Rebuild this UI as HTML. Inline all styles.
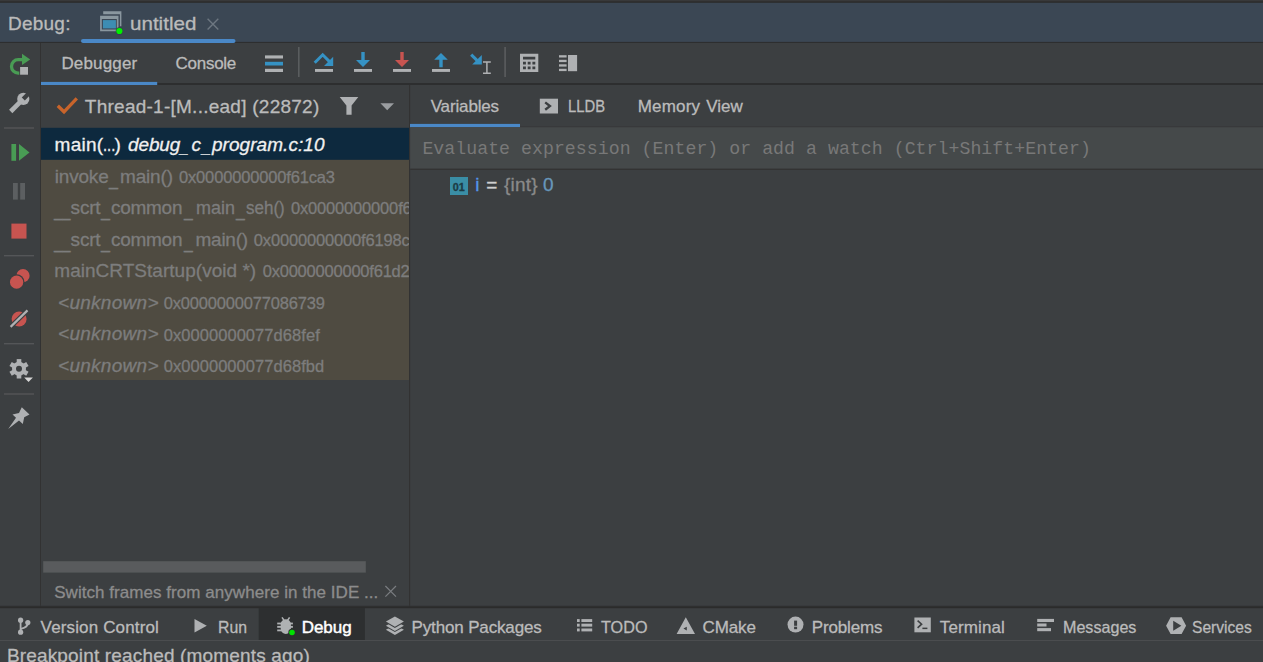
<!DOCTYPE html>
<html lang="en">
<head>
<meta charset="utf-8">
<title>Debug</title>
<style>
html,body{margin:0;padding:0;background:#3c3f41;}
body{width:1263px;height:662px;overflow:hidden;position:relative;font-family:"Liberation Sans",sans-serif;}
.t{position:absolute;white-space:pre;line-height:1;-webkit-text-stroke:0.3px currentColor;}
#bg{position:absolute;left:0;top:0;}
#frames{position:absolute;left:41px;top:128px;width:368px;height:252px;overflow:hidden;}
</style>
</head>
<body>
<svg id="bg" width="1263" height="662" viewBox="0 0 1263 662">
<!-- base -->
<rect x="0" y="0" width="1263" height="662" fill="#3c3f41"/>
<!-- top strip + header -->
<rect x="0" y="0" width="1263" height="42" fill="#3b4754"/>
<rect x="0" y="0" width="1263" height="2.8" fill="#2b2b2b"/>
<rect x="0" y="0" width="1263" height="1.3" fill="#38393a"/>
<rect x="0" y="41.9" width="1263" height="1.1" fill="#2d2e2f"/>
<!-- header tab underline -->
<rect x="81" y="38.9" width="154.5" height="4" rx="2" fill="#4a88c7"/>
<!-- left strip border -->
<rect x="40" y="43" width="1" height="564" fill="#323232"/>
<!-- toolbar bottom border -->
<rect x="41" y="83" width="1222" height="2" fill="#2d2e2f"/>
<!-- debugger tab underline -->
<rect x="41" y="81.9" width="116.2" height="3.1" fill="#4a88c7"/>
<!-- splitter -->
<rect x="409" y="85" width="1.2" height="522" fill="#323232"/>
<!-- frames list -->
<rect x="41" y="128" width="368" height="252" fill="#4f4b41"/>
<rect x="41" y="127.8" width="368" height="32" fill="#0d293e"/>
<!-- variables tab underline -->
<rect x="410" y="123.9" width="110" height="3.4" fill="#4a88c7"/>
<rect x="520" y="126.6" width="743" height="1" fill="#323232"/>
<!-- eval field -->
<rect x="410.2" y="127.2" width="853" height="41.5" fill="#45494a"/>
<rect x="410.2" y="168.7" width="853" height="1.2" fill="#323232"/>
<!-- scrollbar -->
<rect x="43.2" y="561.2" width="322.6" height="11.4" fill="#595b5d"/>
<!-- bottom borders -->
<rect x="0" y="605.6" width="1263" height="1" fill="#343637"/>
<rect x="0" y="606.3" width="1263" height="1.9" fill="#2b2b2b"/>
<rect x="258.7" y="608" width="106.2" height="32" fill="#2d2f30"/>
<rect x="0" y="640" width="1263" height="1" fill="#4b4d4f"/>

<!-- ===== header icon ===== -->
<g>
<path d="M103.2 11.3 H121.4 V26.2 H119.9 V14.3 H103.2 Z" fill="#8a979f"/>
<path fill-rule="evenodd" d="M100.1 15.8 H118.5 V31.2 H100.1 Z M101.8 19 V29.6 H116.8 V19 Z" fill="#8a979f"/>
<rect x="102.9" y="20.1" width="13" height="8.3" fill="#3d8db3"/>
<circle cx="119.4" cy="31" r="3.7" fill="#34404b"/>
<circle cx="119.4" cy="31" r="3.1" fill="#00f000"/>
</g>
<!-- header close x -->
<path d="M207.6 18.7 L218.3 29.4 M218.3 18.7 L207.6 29.4" stroke="#6d7781" stroke-width="1.4" fill="none"/>

<!-- ===== toolbar icons ===== -->
<!-- hamburger -->
<rect x="265" y="55.4" width="18" height="3.1" fill="#afb1b3"/>
<rect x="265" y="61.8" width="18" height="3.7" fill="#3592c4"/>
<rect x="265" y="68.8" width="18" height="3.2" fill="#afb1b3"/>
<!-- sep -->
<rect x="298" y="47" width="1.6" height="30" fill="#5a5d5f"/>
<!-- step over -->
<rect x="315" y="69" width="18" height="2.9" fill="#afb1b3"/>
<path d="M314.7 62.8 L322.7 54.8 L329.5 61.6" stroke="#3592c4" stroke-width="3" fill="none"/>
<path d="M333.2 56.7 L333.2 66 L324 66 Z" fill="#3592c4"/>
<!-- step into -->
<rect x="354" y="69" width="18" height="2.9" fill="#afb1b3"/>
<path d="M361.3 52.1 H364.7 V60.1 H370 L363 67 L356 60.1 H361.3 Z" fill="#3592c4"/>
<!-- force step into -->
<rect x="393" y="69" width="18" height="2.9" fill="#afb1b3"/>
<path d="M400.3 52.1 H403.7 V60.1 H409 L402 67 L395 60.1 H400.3 Z" fill="#c75450"/>
<!-- step out -->
<rect x="432" y="69" width="18" height="2.9" fill="#afb1b3"/>
<path d="M439.3 67.3 H442.7 V59.8 H447.8 L441 53 L434.2 59.8 H439.3 Z" fill="#3592c4"/>
<!-- run to cursor -->
<path d="M471.2 54.6 L478 61.4" stroke="#3592c4" stroke-width="3" fill="none"/>
<path d="M481.8 55 L481.8 64.6 L472.2 64.6 Z" fill="#3592c4"/>
<path d="M483 62 H490.8 M483 73.2 H490.8 M486.9 62 V73.2" stroke="#afb1b3" stroke-width="1.5" fill="none"/>
<!-- sep -->
<rect x="504.3" y="47" width="1.6" height="30" fill="#5a5d5f"/>
<!-- calculator -->
<path fill-rule="evenodd" fill="#afb1b3" d="M520 53.8 H538.3 V72.1 H520 Z M523 56.8 V59.6 H535.3 V56.8 Z M523 61.8 V64.6 H525.9 V61.8 Z M527.7 61.8 V64.6 H530.6 V61.8 Z M532.4 61.8 V64.6 H535.3 V61.8 Z M523 66.4 V69.2 H525.9 V66.4 Z M527.7 66.4 V69.2 H530.6 V66.4 Z M532.4 66.4 V69.2 H535.3 V66.4 Z"/>
<!-- layout -->
<rect x="568" y="55" width="9.1" height="16.2" fill="#afb1b3"/>
<rect x="559" y="55.2" width="7.6" height="2.3" fill="#afb1b3"/>
<rect x="559" y="59.8" width="7.6" height="2.3" fill="#afb1b3"/>
<rect x="559" y="64.3" width="7.6" height="2.3" fill="#afb1b3"/>
<rect x="559" y="68.8" width="7.6" height="2.3" fill="#afb1b3"/>

<!-- ===== left strip icons ===== -->
<!-- rerun -->
<path d="M22.4 59.7 H18.2 A6.7 6.7 0 0 0 18.2 73.1 H20" stroke="#499c54" stroke-width="3.3" fill="none"/>
<path d="M22 53.8 L30.2 59.4 L22 65 Z" fill="#499c54"/>
<rect x="19.3" y="66.2" width="9.5" height="9.2" fill="#3c3f41"/>
<rect x="20.1" y="67" width="7.9" height="7.7" fill="#afb1b3"/>
<!-- wrench -->
<path d="M10.7 111.5 L23.3 98.9" stroke="#afb1b3" stroke-width="4.6" fill="none"/>
<circle cx="23.3" cy="98.9" r="6.1" fill="#afb1b3"/>
<rect x="23.3" y="96.75" width="8" height="4.3" fill="#3c3f41" transform="rotate(-45 23.3 98.9)"/>
<!-- seps -->
<rect x="4" y="127.3" width="30" height="1.4" fill="#545658"/>
<rect x="4" y="255" width="30" height="1.4" fill="#545658"/>
<rect x="4" y="343" width="30" height="1.4" fill="#545658"/>
<rect x="4" y="393.3" width="30" height="1.4" fill="#545658"/>
<!-- resume -->
<rect x="11.4" y="144" width="4.7" height="16.8" fill="#499c54"/>
<path d="M19 144 L29.5 152.4 L19 160.8 Z" fill="#499c54"/>
<!-- pause -->
<rect x="13" y="183" width="4.8" height="16.6" fill="#5c5f61"/>
<rect x="20.2" y="183" width="4.8" height="16.6" fill="#5c5f61"/>
<!-- stop -->
<rect x="11.4" y="223.6" width="15.1" height="15" fill="#c75450"/>
<!-- view breakpoints -->
<circle cx="23" cy="275.7" r="6.6" fill="#c75450"/>
<circle cx="16.6" cy="282.2" r="7.9" fill="#3c3f41"/>
<circle cx="16.6" cy="282.2" r="6.6" fill="#c75450"/>
<!-- mute breakpoints -->
<circle cx="19.1" cy="319" r="7.5" fill="#c75450"/>
<path d="M10.6 326.9 L27.5 310.4" stroke="#3c3f41" stroke-width="4.6" fill="none"/>
<path d="M10.6 326.9 L27.5 310.4" stroke="#afb1b3" stroke-width="2.2" fill="none"/>
<!-- gear -->
<g transform="translate(19,368.8)">
<circle r="5" fill="none" stroke="#afb1b3" stroke-width="4"/>
<g fill="#afb1b3">
<rect x="-2.3" y="-9.7" width="4.6" height="4" />
<rect x="-2.3" y="5.7" width="4.6" height="4" />
<rect x="-2.3" y="-9.7" width="4.6" height="4" transform="rotate(60)"/>
<rect x="-2.3" y="5.7" width="4.6" height="4" transform="rotate(60)"/>
<rect x="-2.3" y="-9.7" width="4.6" height="4" transform="rotate(120)"/>
<rect x="-2.3" y="5.7" width="4.6" height="4" transform="rotate(120)"/>
</g>
</g>
<path d="M23.2 376.6 H33.8 L28.5 382.6 Z" fill="#3c3f41"/>
<path d="M24.2 377.4 H32.9 L28.5 382 Z" fill="#d6d6d6"/>
<!-- pin -->
<path d="M21.8 407.3 L29.5 414.6 L24.2 417.3 L22.8 424.1 L19 420.4 L8.2 429 L16 417.7 L12.5 414.6 L19 413 Z" fill="#afb1b3"/>

<!-- ===== thread row icons ===== -->
<path d="M57.8 105.8 L64 111.8 L76.8 98.4" stroke="#c8642b" stroke-width="3.3" fill="none"/>
<path d="M339.7 96.9 H358.3 L351.6 105.6 V114.8 H346.4 V105.6 Z" fill="#afb1b3"/>
<path d="M380.4 103.2 H394 L387.2 110.3 Z" fill="#9a9da0"/>

<!-- LLDB icon -->
<rect x="539.8" y="98.7" width="18.2" height="14.8" fill="#afb1b3"/>
<path d="M545.2 102.4 L549.9 106.1 L545.2 109.8" stroke="#3c3f41" stroke-width="2.4" fill="none"/>

<!-- var icon -->
<rect x="450" y="177" width="18" height="18" fill="#3a8ea6"/>

<!-- hint close -->
<path d="M385.4 586 L396 596.6 M396 586 L385.4 596.6" stroke="#7a7d80" stroke-width="1.2" fill="none"/>

<!-- ===== bottom bar icons ===== -->
<!-- vcs branch -->
<g stroke="#afb1b3" fill="none" stroke-width="1.8">
<path d="M20.6 620 V632"/>
<path d="M20.6 629 C 24 628, 27.6 627.4, 27.8 623.4"/>
</g>
<circle cx="20.6" cy="620.2" r="2.6" fill="#afb1b3"/>
<circle cx="20.6" cy="632.2" r="2.6" fill="#afb1b3"/>
<circle cx="27.8" cy="622.6" r="2.6" fill="#afb1b3"/>
<!-- run -->
<path d="M194.5 619 L206.8 625.8 L194.5 632.6 Z" fill="#afb1b3"/>
<!-- bug -->
<g fill="#afb1b3">
<path d="M280.7 624.2 A5.1 5 0 0 1 290.9 624.2 V628.6 A5.1 5.3 0 0 1 280.7 628.6 Z"/>
<rect x="277.2" y="622.6" width="15.7" height="1.8"/>
<rect x="277.2" y="625.9" width="15.7" height="1.9"/>
<rect x="277.2" y="629.5" width="15.7" height="1.8"/>
</g>
<path d="M282 617.4 L284.2 620.6 M289.6 617.4 L287.4 620.6" stroke="#afb1b3" stroke-width="1.6" fill="none"/>
<circle cx="292" cy="632.5" r="3.7" fill="#2d2f30"/>
<circle cx="292" cy="632.5" r="2.8" fill="#00e000"/>
<!-- layers -->
<path d="M394.9 624.65 L403.9 629.8 L394.9 634.95 L385.9 629.8 Z" fill="#afb1b3"/>
<path d="M394.9 621.75 L403.9 626.9 L394.9 632.05 L385.9 626.9 Z" fill="#3c3f41"/>
<path d="M394.9 620.65 L403.9 625.8 L394.9 630.95 L385.9 625.8 Z" fill="#afb1b3"/>
<path d="M394.9 617.65 L403.9 622.8 L394.9 627.95 L385.9 622.8 Z" fill="#3c3f41"/>
<path d="M394.9 616.40 L403.9 621.55 L394.9 626.70 L385.9 621.55 Z" fill="#afb1b3"/>
<!-- todo -->
<g fill="#afb1b3">
<rect x="577" y="619.1" width="2.7" height="2.9"/><rect x="581.4" y="619.1" width="10.8" height="2.9"/>
<rect x="577" y="623.7" width="2.7" height="2.9"/><rect x="581.4" y="623.7" width="10.8" height="2.9"/>
<rect x="577" y="628.5" width="2.7" height="2.9"/><rect x="581.4" y="628.5" width="10.8" height="2.9"/>
</g>
<!-- cmake -->
<path fill-rule="evenodd" d="M685.8 617.2 L695 633.9 H676.6 Z M683.4 628.6 L686.8 626.8 V630.6 Z" fill="#afb1b3"/>
<!-- problems -->
<circle cx="795.5" cy="624.6" r="8" fill="#afb1b3"/>
<rect x="794.1" y="620.6" width="3" height="5.2" fill="#3c3f41"/>
<rect x="794.1" y="626.7" width="3" height="2.5" fill="#3c3f41"/>
<!-- terminal -->
<rect x="914.4" y="617.5" width="16.4" height="14.8" fill="#afb1b3"/>
<path d="M917.6 620.6 L921.6 624.2 L917.6 627.8" stroke="#3c3f41" stroke-width="1.6" fill="none"/>
<rect x="922.4" y="627.6" width="5" height="1.5" fill="#3c3f41"/>
<!-- messages -->
<g fill="#afb1b3">
<rect x="1037.2" y="618.9" width="16.8" height="3.1"/>
<rect x="1037.2" y="623.5" width="9.3" height="3"/>
<rect x="1037.2" y="628.1" width="13.8" height="3.1"/>
</g>
<!-- services -->
<path fill-rule="evenodd" d="M1170.6 617.3 H1181.6 L1186.1 625.7 L1181.6 634.1 H1170.6 L1166.1 625.7 Z M1173.2 620.8 V630.8 L1181.4 625.8 Z" fill="#afb1b3"/>
</svg>
<div id="frames">

<span class="t" id="r1_0" style="left:13.60px;top:7.12px;font-size:19px;color:#f0f0f0;letter-spacing:0.237px;">main(</span><span class="t" id="r1_1" style="left:61.50px;top:7.12px;font-size:19px;color:#f0f0f0;transform:scaleX(0.7763);transform-origin:0 0;">...</span><span class="t" id="r1_2" style="left:73.60px;top:7.12px;font-size:19px;color:#f0f0f0;">)</span>
<span class="t" id="r1_3" style="left:87.00px;top:7.12px;font-size:19px;color:#f0f0f0;letter-spacing:-0.109px;font-style:italic;">debug</span><span class="t" id="r1_4" style="left:139.30px;top:8.92px;font-size:19px;color:#f0f0f0;transform:scaleX(0.8130);transform-origin:0 0;font-style:italic;">_</span><span class="t" id="r1_5" style="left:150.60px;top:7.12px;font-size:19px;color:#f0f0f0;font-style:italic;">c</span><span class="t" id="r1_6" style="left:160.50px;top:8.92px;font-size:19px;color:#f0f0f0;transform:scaleX(0.8508);transform-origin:0 0;font-style:italic;">_</span><span class="t" id="r1_7" style="left:170.90px;top:7.12px;font-size:19px;color:#f0f0f0;letter-spacing:0.062px;font-style:italic;">program.c:10</span>
<span class="t" id="r2_0" style="left:13.80px;top:38.82px;font-size:19px;color:#7d7d7d;letter-spacing:-0.204px;">invoke</span><span class="t" id="r2_1" style="left:68.20px;top:40.62px;font-size:19px;color:#7d7d7d;transform:scaleX(0.8508);transform-origin:0 0;">_</span><span class="t" id="r2_2" style="left:79.00px;top:38.82px;font-size:19px;color:#7d7d7d;letter-spacing:-0.174px;">main()</span>
<span class="t" id="f2b" style="left:138.00px;top:40.93px;font-size:16.5px;color:#7d7d7d;letter-spacing:-0.163px;">0x0000000000f61ca3</span>
<span class="t" id="r3_0" style="left:12.90px;top:72.12px;font-size:19px;color:#7d7d7d;transform:scaleX(0.7805);transform-origin:0 0;">__</span><span class="t" id="r3_1" style="left:29.60px;top:70.32px;font-size:19px;color:#7d7d7d;letter-spacing:-0.202px;">scrt</span><span class="t" id="r3_2" style="left:59.70px;top:72.12px;font-size:19px;color:#7d7d7d;transform:scaleX(0.8508);transform-origin:0 0;">_</span><span class="t" id="r3_3" style="left:70.00px;top:70.32px;font-size:19px;color:#7d7d7d;letter-spacing:-0.277px;">common</span><span class="t" id="r3_4" style="left:143.40px;top:72.12px;font-size:19px;color:#7d7d7d;transform:scaleX(0.8319);transform-origin:0 0;">_</span><span class="t" id="r3_5" style="left:154.50px;top:70.32px;font-size:19px;color:#7d7d7d;transform:scaleX(0.9469);transform-origin:0 0;">main</span><span class="t" id="r3_6" style="left:194.60px;top:72.12px;font-size:19px;color:#7d7d7d;transform:scaleX(0.8319);transform-origin:0 0;">_</span><span class="t" id="r3_7" style="left:205.00px;top:70.32px;font-size:19px;color:#7d7d7d;transform:scaleX(0.8961);transform-origin:0 0;">seh()</span>
<span class="t" id="f3b" style="left:249.90px;top:72.43px;font-size:16.5px;color:#7d7d7d;letter-spacing:-0.163px;">0x0000000000f61c88</span>
<span class="t" id="r4_0" style="left:12.90px;top:103.62px;font-size:19px;color:#7d7d7d;transform:scaleX(0.7805);transform-origin:0 0;">__</span><span class="t" id="r4_1" style="left:29.60px;top:101.82px;font-size:19px;color:#7d7d7d;letter-spacing:-0.202px;">scrt</span><span class="t" id="r4_2" style="left:59.70px;top:103.62px;font-size:19px;color:#7d7d7d;transform:scaleX(0.8508);transform-origin:0 0;">_</span><span class="t" id="r4_3" style="left:70.00px;top:101.82px;font-size:19px;color:#7d7d7d;letter-spacing:-0.277px;">common</span><span class="t" id="r4_4" style="left:143.40px;top:103.62px;font-size:19px;color:#7d7d7d;transform:scaleX(0.8319);transform-origin:0 0;">_</span><span class="t" id="r4_5" style="left:154.50px;top:101.82px;font-size:19px;color:#7d7d7d;letter-spacing:-0.257px;">main()</span>
<span class="t" id="f4b" style="left:212.80px;top:103.93px;font-size:16.5px;color:#7d7d7d;letter-spacing:-0.163px;">0x0000000000f6198c</span>
<span class="t" id="f5a" style="left:13.30px;top:133.32px;font-size:19px;color:#7d7d7d;letter-spacing:0.026px;">mainCRTStartup(void *)</span>
<span class="t" id="f5b" style="left:221.70px;top:135.43px;font-size:16.5px;color:#7d7d7d;letter-spacing:-0.215px;">0x0000000000f61d28</span>
<span class="t" id="f6a" style="left:17.00px;top:165.02px;font-size:19px;color:#7d7d7d;letter-spacing:0.283px;font-style:italic;">&lt;unknown&gt;</span>
<span class="t" id="f6b" style="left:122.70px;top:167.13px;font-size:16.5px;color:#7d7d7d;letter-spacing:-0.170px;">0x0000000077086739</span>
<span class="t" id="f7a" style="left:17.00px;top:196.42px;font-size:19px;color:#7d7d7d;letter-spacing:0.283px;font-style:italic;">&lt;unknown&gt;</span>
<span class="t" id="f7b" style="left:122.70px;top:198.53px;font-size:16.5px;color:#7d7d7d;letter-spacing:0.057px;">0x0000000077d68fef</span>
<span class="t" id="f8a" style="left:17.00px;top:227.82px;font-size:19px;color:#7d7d7d;letter-spacing:0.283px;font-style:italic;">&lt;unknown&gt;</span>
<span class="t" id="f8b" style="left:122.70px;top:229.93px;font-size:16.5px;color:#7d7d7d;letter-spacing:0.052px;">0x0000000077d68fbd</span>
</div>
<span class="t" id="h1" style="left:8.00px;top:13.62px;font-size:19px;color:#bbbbbb;letter-spacing:0.236px;">Debug:</span>
<span class="t" id="h2" style="left:129.60px;top:13.62px;font-size:19px;color:#bbbbbb;transform:scaleX(1.0835);transform-origin:0 0;">untitled</span>
<span class="t" id="tb1" style="left:61.40px;top:55.31px;font-size:17px;color:#bbbbbb;letter-spacing:0.166px;">Debugger</span>
<span class="t" id="tb2" style="left:175.60px;top:55.31px;font-size:17px;color:#bbbbbb;letter-spacing:-0.282px;">Console</span>
<span class="t" id="th" style="left:84.80px;top:97.22px;font-size:19px;color:#bbbbbb;letter-spacing:0.253px;">Thread-1-[M...ead] (22872)</span>
<span class="t" id="v1" style="left:430.70px;top:97.61px;font-size:17px;color:#bbbbbb;letter-spacing:-0.147px;">Variables</span>
<span class="t" id="v2" style="left:567.50px;top:97.61px;font-size:17px;color:#bbbbbb;transform:scaleX(0.8699);transform-origin:0 0;">LLDB</span>
<span class="t" id="v3" style="left:637.70px;top:97.61px;font-size:17px;color:#bbbbbb;letter-spacing:0.182px;">Memory</span>
<span class="t" id="v3b" style="left:706.20px;top:97.61px;font-size:17px;color:#bbbbbb;letter-spacing:0.038px;">View</span>
<span class="t" id="ev" style="left:422.40px;top:140.05px;font-size:18.2px;color:#787878;font-family:'Liberation Mono', monospace;letter-spacing:0.046px;-webkit-text-stroke:0;">Evaluate expression (Enter) or add a watch (Ctrl+Shift+Enter)</span>
<span class="t" id="vic" style="left:452.80px;top:181.86px;font-size:10.8px;color:#1d3b45;letter-spacing:-0.108px;font-weight:bold;">01</span>
<span class="t" id="vi" style="left:475.20px;top:174.82px;font-size:19px;color:#5394ec;">i</span>
<span class="t" id="ve" style="left:486.30px;top:174.82px;font-size:19px;color:#cfcfcf;">=</span>
<span class="t" id="vt" style="left:504.00px;top:174.82px;font-size:19px;color:#8a8a8a;letter-spacing:0.207px;">{int}</span>
<span class="t" id="v0" style="left:543.00px;top:174.82px;font-size:19px;color:#6897bb;">0</span>
<span class="t" id="sw" style="left:54.20px;top:583.81px;font-size:17px;color:#8c8c8c;letter-spacing:0.048px;">Switch frames from anywhere in the IDE ...</span>
<span class="t" id="b1" style="left:40.60px;top:618.81px;font-size:17px;color:#bbbbbb;letter-spacing:0.144px;">Version Control</span>
<span class="t" id="b2" style="left:217.80px;top:618.81px;font-size:17px;color:#bbbbbb;transform:scaleX(0.9299);transform-origin:0 0;">Run</span>
<span class="t" id="b3" style="left:301.70px;top:618.81px;font-size:17px;color:#ffffff;letter-spacing:-0.022px;-webkit-text-stroke:0.45px #fff;">Debug</span>
<span class="t" id="b4" style="left:411.60px;top:618.81px;font-size:17px;color:#bbbbbb;letter-spacing:-0.154px;">Python Packages</span>
<span class="t" id="b5" style="left:600.50px;top:618.81px;font-size:17px;color:#bbbbbb;transform:scaleX(0.9526);transform-origin:0 0;">TODO</span>
<span class="t" id="b6" style="left:702.60px;top:618.81px;font-size:17px;color:#bbbbbb;letter-spacing:-0.132px;">CMake</span>
<span class="t" id="b7" style="left:811.80px;top:618.81px;font-size:17px;color:#bbbbbb;letter-spacing:-0.152px;">Problems</span>
<span class="t" id="b8" style="left:939.80px;top:618.81px;font-size:17px;color:#bbbbbb;letter-spacing:0.119px;">Terminal</span>
<span class="t" id="b9" style="left:1062.70px;top:618.81px;font-size:17px;color:#bbbbbb;transform:scaleX(0.9473);transform-origin:0 0;">Messages</span>
<span class="t" id="b10" style="left:1192.30px;top:618.81px;font-size:17px;color:#bbbbbb;transform:scaleX(0.9158);transform-origin:0 0;">Services</span>
<span class="t" id="st" style="left:6.90px;top:645.82px;font-size:19px;color:#bbbbbb;letter-spacing:0.165px;">Breakpoint reached (moments ago)</span>
</body>
</html>
